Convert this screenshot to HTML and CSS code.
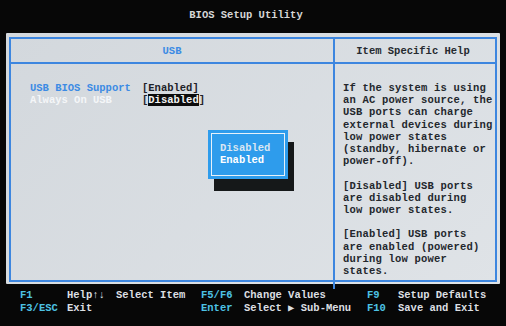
FILE: index.html
```html
<!DOCTYPE html>
<html lang="en">

<head>
    <meta charset="UTF-8">
    <title>BIOS Setup Utility</title>
    <link rel="stylesheet" href="styles.css">
</head>

<body>
    <div class="title">BIOS Setup Utility</div>

    <div class="panel">
        <div class="frame">
            <div class="head head-left">USB</div>
            <div class="head head-right">Item Specific Help</div>

            <div class="main">
                <div class="item">
                    <span class="label active">USB BIOS Support</span>
                    <span class="value">[Enabled]</span>
                </div>
                <div class="item">
                    <span class="label dim">Always On USB</span>
                    <span class="value">[<span class="sel">Disabled</span>]</span>
                </div>

                <div class="popup">
                    <div class="popup-inner">
                        <div class="opt">Disabled</div>
                        <div class="opt cur">Enabled</div>
                    </div>
                </div>
            </div>

            <div class="help">
                <p>If the system is using<br>an AC power source, the<br>USB ports can charge<br>external devices during<br>low power states<br>(standby, hibernate or<br>power-off).</p>
                <p>[Disabled] USB ports<br>are disabled during<br>low power states.</p>
                <p>[Enabled] USB ports<br>are enabled (powered)<br>during low power<br>states.</p>
            </div>
        </div>
    </div>

    <div class="footer">
        <span class="key">F1</span>
        <span class="desc">Help&uarr;&darr;</span>
        <span class="desc">Select Item</span>
        <span class="key">F5/F6</span>
        <span class="desc">Change Values</span>
        <span class="key">F9</span>
        <span class="desc">Setup Defaults</span>

        <span class="key">F3/ESC</span>
        <span class="desc">Exit</span>
        <span class="desc"></span>
        <span class="key">Enter</span>
        <span class="desc">Select &#9654; Sub-Menu</span>
        <span class="key">F10</span>
        <span class="desc">Save and Exit</span>
    </div>
</body>

</html>
```

FILE: styles.css
```css
* {
    margin: 0;
    padding: 0;
    box-sizing: border-box;
}

body {
    width: 506px;
    height: 326px;
    background: #070707;
    font-family: 'Liberation Mono', 'DejaVu Sans Mono', monospace;
    font-size: 10.5px;
    font-weight: bold;
    overflow: hidden;
}

.title {
    height: 33px;
    padding: 9px 14px 0 0;
    text-align: center;
    color: #d6d6d6;
    line-height: 13px;
}

/* 主面板 */
.panel {
    margin-left: 6px;
    width: 494px;
    height: 251px;
    padding: 4px 3px 2px 3px;
    background: linear-gradient(135deg, #d3d8dd, #dfe3e7);
    border-radius: 1px;
}

.frame {
    height: 100%;
    border: 2px solid #3d86df;
    display: grid;
    grid-template-columns: 324px 1fr;
    grid-template-rows: 25px 1fr;
}

.head {
    border-bottom: 2px solid #3d86df;
    text-align: center;
    line-height: 24px;
}

.head-left {
    color: #3c8be4;
    border-right: 2px solid #3d86df;
}

.head-right {
    color: #262a30;
    padding-right: 4px;
}

.main {
    position: relative;
    border-right: 2px solid #3d86df;
    padding: 18px 0 0 19px;
}

.item {
    display: flex;
    line-height: 12.2px;
}

.label {
    width: 112px;
}

.active {
    color: #3c8be4;
}

.dim {
    color: #f4f6f8;
}

.value {
    color: #1e2228;
}

.sel {
    background: #0c0c0c;
    color: #f4f4f4;
}

/* 弹出选项框 */
.popup {
    position: absolute;
    left: 197px;
    top: 66px;
    width: 80px;
    height: 49px;
    background: #2e9cec;
    padding: 3px;
    box-shadow: 6px 12px 0 #151819;
}

.popup-inner {
    height: 100%;
    border: 1px solid #e6f1fa;
    padding: 8px 0 0 8px;
}

.opt {
    line-height: 12.2px;
    color: #d9e6f2;
}

.opt.cur {
    color: #ffffff;
}

.help {
    padding: 18px 0 0 8px;
    color: #23272d;
    line-height: 12.2px;
    letter-spacing: 0.2px;
}

.help p {
    margin-bottom: 12.2px;
}

/* 底部按键说明 */
.footer {
    display: grid;
    grid-template-columns: 47px 49px 85px 43px 123px 31px auto;
    padding: 5px 0 0 20px;
    line-height: 13px;
}

.key {
    color: #4dc2e4;
}

.desc {
    color: #dcdfe2;
}
```
